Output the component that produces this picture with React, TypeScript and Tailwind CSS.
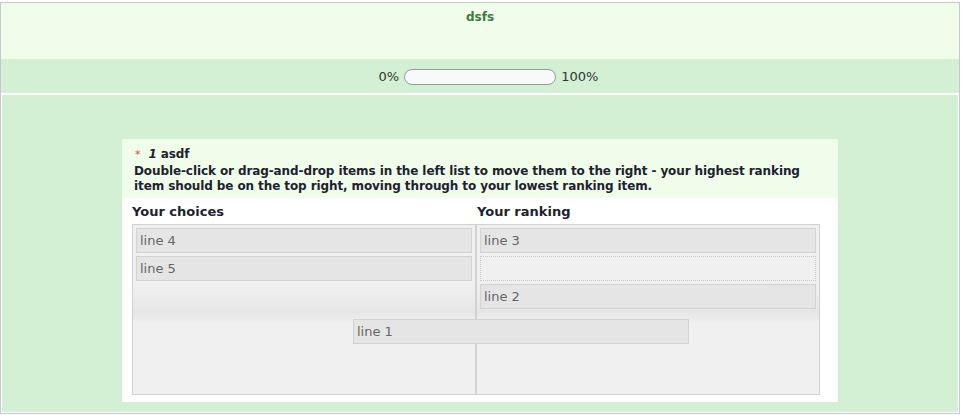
import React from "react";

const font = { fontFamily: '"DejaVu Sans", Verdana, sans-serif' };

function Item({ label }: { label: string }) {
  return (
    <div className="h-[25px] border border-[#d2d2d2] bg-[#e5e5e5] pl-[3px] text-[13px] leading-[23px] text-[#666]">
      {label}
    </div>
  );
}

export default function App() {
  return (
    <div className="min-h-[419px] bg-white pt-[2px]" style={font}>
      <div className="w-[960px] h-[412px] border border-[#c5c9cf] flex flex-col">
        {/* survey title */}
        <div className="h-[56px] bg-[#effdea] text-center pt-[5px] text-[12px] font-bold text-[#3e7b3e]">
          dsfs
        </div>

        {/* progress */}
        <div className="h-[34px] bg-[#d3f0d4] flex items-center justify-center gap-[5px] pl-[17px] pt-[2px] text-[13px] text-[#333]">
          <span>0%</span>
          <div className="w-[152px] h-[16px] rounded-full border border-[#9a9a9a] bg-[#f8f9fb]" />
          <span>100%</span>
        </div>

        <div className="h-[2px] bg-white" />

        <div className="flex-1 mx-[1px] mb-[1px] bg-[#d3f0d4] pt-[44px] pl-[120px]">
          <div className="w-[716px] bg-white">
            {/* question header */}
            <div className="h-[59px] bg-[#effdea] pl-[12px] pt-[8px] text-[12px] font-bold leading-[15px] tracking-[-0.1px] text-[#1e2230] whitespace-nowrap">
              <div className="flex items-baseline">
                <span className="text-[#e04040] font-normal text-[11px] ml-[1px] mr-[8px]">*</span>
                <span className="italic mr-[4px]">1</span>
                <span>asdf</span>
              </div>
              <div className="mt-[2px]">
                Double-click or drag-and-drop items in the left list to move them to the right - your highest ranking
                <br />
                item should be on the top right, moving through to your lowest ranking item.
              </div>
            </div>

            <div className="pl-[10px] pr-[18px] pb-[7px]">
              <div className="flex h-[26px] items-center pt-[1px] text-[13px] font-bold text-[#1e2230]">
                <div className="w-[345px]">Your choices</div>
                <div>Your ranking</div>
              </div>

              <div className="relative flex h-[171px] border border-[#d2d2d2] bg-[#f0f0f0]">
                {/* drag shadow band */}
                <div className="absolute left-0 right-0 top-[56px] h-[42px] bg-[linear-gradient(to_bottom,#f0f0f0_0%,#ececec_40%,#e6e6e6_75%,#f0f0f0_100%)]" />

                <div className="relative w-[344px] flex flex-col gap-[3px] p-[3px] border-r-2 border-[#d2d2d2]">
                  <Item label="line 4" />
                  <Item label="line 5" />
                </div>
                <div className="relative flex-1 flex flex-col gap-[3px] p-[3px]">
                  <Item label="line 3" />
                  <div className="h-[25px] border border-dotted border-[#c8c8c8] bg-[#f0f0f0]" />
                  <Item label="line 2" />
                </div>

                {/* item being dragged */}
                <div className="absolute left-[220px] top-[94px] w-[336px]">
                  <Item label="line 1" />
                </div>
              </div>
            </div>
          </div>
        </div>
      </div>
    </div>
  );
}
